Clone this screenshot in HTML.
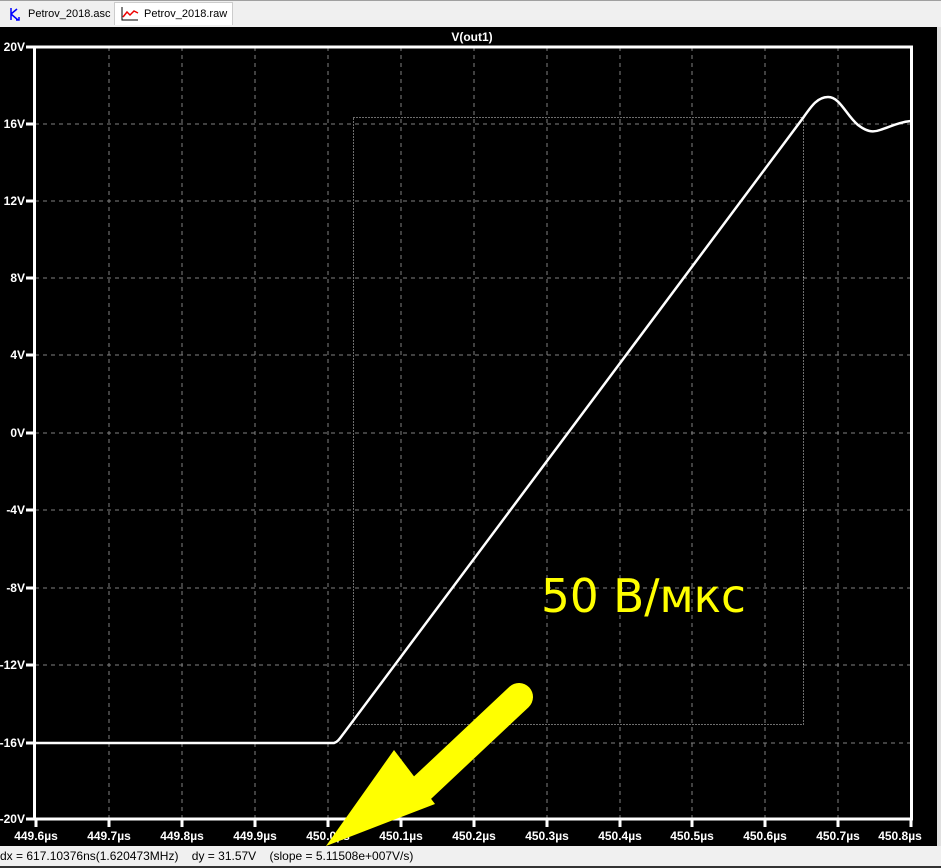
<!DOCTYPE html>
<html><head><meta charset="utf-8"><style>
body{margin:0;width:941px;height:868px;overflow:hidden;background:#f0f0f0;font-family:"Liberation Sans",sans-serif}
.tabs{position:absolute;left:0;top:0;width:941px;height:27px;background:#f0f0f0;border-top:1px solid #a0a0a0}
.tab{position:absolute;top:3px;height:20px;font-size:11px;line-height:20px;color:#000;white-space:nowrap}
svg{position:absolute;left:0;top:0}
.status{position:absolute;left:0;top:846px;width:941px;height:20px;background:#f0f0f0;font-size:12px;line-height:20px;color:#000;white-space:pre}
</style></head><body>
<div class="tabs">
<div class="tab" style="left:0;width:112px;background:#f0f0f0"><svg width="20" height="20" style="left:6px;top:1px"><path d="M5 3 V15 M5 9 L11 4 M5 9 L12 15 M10 15 h3 v-3" stroke="#00f" stroke-width="1.5" fill="none"/></svg><span style="position:absolute;left:28px">Petrov_2018.asc</span></div>
<div class="tab" style="left:114px;top:1px;height:22px;width:117px;background:#fff;border:1px solid #ccc;border-bottom:none"><svg width="20" height="16" style="left:6px;top:3px"><path d="M1 1 V14 H17" stroke="#000" fill="none"/><path d="M2 11 L6 6 L9 9 L13 5 L17 7" stroke="#e00" stroke-width="1.5" fill="none"/></svg><span style="position:absolute;left:29px;top:1px">Petrov_2018.raw</span></div>
</div>
<svg width="941" height="868" viewBox="0 0 941 868">
<rect x="0" y="27" width="937" height="819" fill="#000"/>
<rect x="937" y="27" width="4" height="819" fill="#e0e0e0"/>
<g stroke="#808080" stroke-width="1" stroke-dasharray="4,4">
<line x1="109" y1="47" x2="109" y2="819"/><line x1="182" y1="47" x2="182" y2="819"/><line x1="255" y1="47" x2="255" y2="819"/><line x1="328" y1="47" x2="328" y2="819"/><line x1="401" y1="47" x2="401" y2="819"/><line x1="474" y1="47" x2="474" y2="819"/><line x1="547" y1="47" x2="547" y2="819"/><line x1="620" y1="47" x2="620" y2="819"/><line x1="692" y1="47" x2="692" y2="819"/><line x1="765" y1="47" x2="765" y2="819"/><line x1="838" y1="47" x2="838" y2="819"/>
<line x1="35" y1="124" x2="911" y2="124"/><line x1="35" y1="201" x2="911" y2="201"/><line x1="35" y1="278" x2="911" y2="278"/><line x1="35" y1="355" x2="911" y2="355"/><line x1="35" y1="433" x2="911" y2="433"/><line x1="35" y1="510" x2="911" y2="510"/><line x1="35" y1="588" x2="911" y2="588"/><line x1="35" y1="665" x2="911" y2="665"/><line x1="35" y1="743" x2="911" y2="743"/>
</g>
<rect x="353.5" y="117.5" width="450" height="607" fill="none" stroke="#ddd" stroke-width="1" stroke-dasharray="1,2"/>
<rect x="34.5" y="47" width="877" height="772" fill="none" stroke="#fff" stroke-width="3"/>
<g stroke="#fff" stroke-width="3">
<line x1="26" y1="47" x2="34" y2="47"/><line x1="26" y1="124" x2="34" y2="124"/><line x1="26" y1="201" x2="34" y2="201"/><line x1="26" y1="278" x2="34" y2="278"/><line x1="26" y1="355" x2="34" y2="355"/><line x1="26" y1="433" x2="34" y2="433"/><line x1="26" y1="510" x2="34" y2="510"/><line x1="26" y1="588" x2="34" y2="588"/><line x1="26" y1="665" x2="34" y2="665"/><line x1="26" y1="743" x2="34" y2="743"/><line x1="26" y1="819" x2="34" y2="819"/>
<line x1="36" y1="819" x2="36" y2="827"/><line x1="109" y1="819" x2="109" y2="827"/><line x1="182" y1="819" x2="182" y2="827"/><line x1="255" y1="819" x2="255" y2="827"/><line x1="328" y1="819" x2="328" y2="827"/><line x1="401" y1="819" x2="401" y2="827"/><line x1="474" y1="819" x2="474" y2="827"/><line x1="547" y1="819" x2="547" y2="827"/><line x1="620" y1="819" x2="620" y2="827"/><line x1="692" y1="819" x2="692" y2="827"/><line x1="765" y1="819" x2="765" y2="827"/><line x1="838" y1="819" x2="838" y2="827"/><line x1="911" y1="819" x2="911" y2="827"/>
</g>
<g fill="#fff" font-family="Liberation Sans" font-weight="bold" font-size="12" text-anchor="end">
<text x="25" y="51">20V</text><text x="25" y="128">16V</text><text x="25" y="205">12V</text><text x="25" y="282">8V</text><text x="25" y="359">4V</text><text x="25" y="437">0V</text><text x="25" y="514">-4V</text><text x="25" y="592">-8V</text><text x="25" y="669">-12V</text><text x="25" y="747">-16V</text><text x="25" y="823">-20V</text>
</g>
<g fill="#fff" font-family="Liberation Sans" font-weight="bold" font-size="12" text-anchor="middle">
<text x="36" y="840">449.6µs</text><text x="109" y="840">449.7µs</text><text x="182" y="840">449.8µs</text><text x="255" y="840">449.9µs</text><text x="328" y="840">450.0µs</text><text x="401" y="840">450.1µs</text><text x="474" y="840">450.2µs</text><text x="547" y="840">450.3µs</text><text x="620" y="840">450.4µs</text><text x="692" y="840">450.5µs</text><text x="765" y="840">450.6µs</text><text x="838" y="840">450.7µs</text><text x="900" y="840">450.8µs</text>
<text x="472" y="41">V(out1)</text>
</g>
<path d="M36 743 L334 743 C338 742 340 738 344 733 L803 118 C812 105 818 97 828 97 C840 97 846 115 858 125 C866 131 872 133 880 130 C892 126 900 122 911 121" fill="none" stroke="#fff" stroke-width="2.5"/>
<text x="541" y="612" fill="#ff0" font-family="DejaVu Sans" font-size="46" textLength="205" lengthAdjust="spacingAndGlyphs">50 В/мкс</text>
<line x1="519" y1="697" x2="420" y2="790" stroke="#ff0" stroke-width="28" stroke-linecap="round"/>
<polygon points="326,846 394,750 435,804" fill="#ff0"/>
</svg>
<div class="status">dx = 617.10376ns(1.620473MHz)    dy = 31.57V    (slope = 5.11508e+007V/s)</div>
<div style="position:absolute;left:0;top:866px;width:941px;height:2px;background:#333"></div>
</body></html>
